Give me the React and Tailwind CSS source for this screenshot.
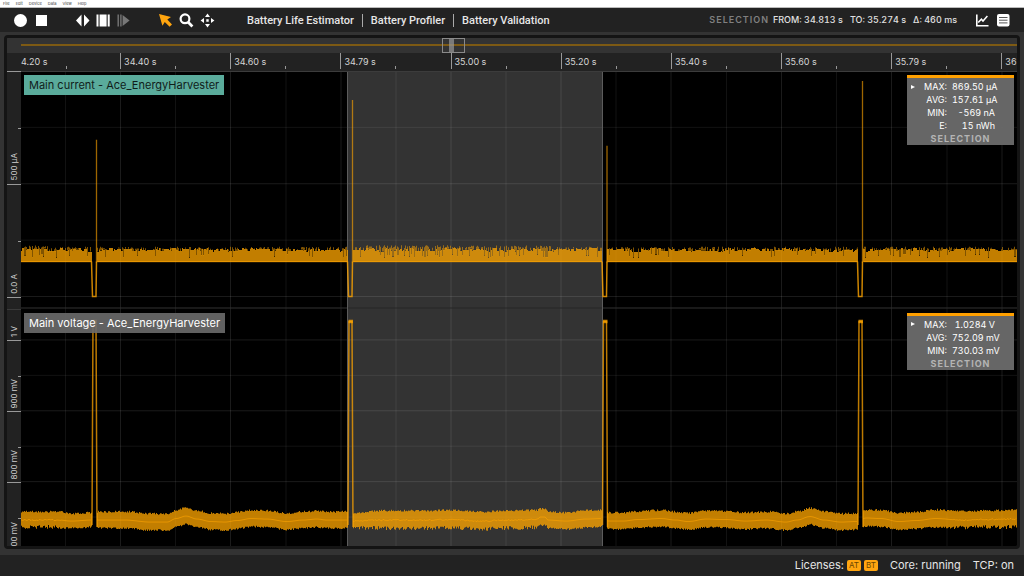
import React from "react";

const WIDTH = 996;
const HEIGHT = 476;
const LANE = 238;

const MENU = ["File", "Edit", "Device", "Data", "View", "Help"];
const PAGES = ["Battery Life Estimator", "Battery Profiler", "Battery Validation"];
const TIMES = ["34.40 s", "34.60 s", "34.79 s", "35.00 s", "35.20 s", "35.40 s", "35.60 s", "35.79 s", "36"];

const PULSES = [
  { x: 71.5, w: 4, peak: 69 },
  { x: 327.5, w: 4, peak: 29 },
  { x: 582, w: 4, peak: 75 },
  { x: 837.5, w: 4, peak: 10 },
];

// Mean voltage trace: [x, y, half height of the noise band]
const VOLTAGE_MEAN = [
  [0, 450, 8], [38, 450, 8], [50, 451, 7], [71, 450, 7], [78, 450, 8], [104, 450, 8], [129, 452, 8],
  [146, 452, 8], [155, 448.5, 8], [165, 446, 8], [176, 449, 8], [190, 451.5, 8], [204, 452, 8],
  [216, 450.5, 8], [230, 448.5, 8], [246, 449, 8], [266, 451.5, 8], [282, 450, 8], [296, 449, 8],
  [306, 450, 8], [325, 450, 8], [334, 451, 8], [360, 450, 9], [400, 450, 9], [430, 449.5, 9], [460, 451, 9],
  [485, 450, 9], [516, 449.5, 9], [519, 447, 8], [524, 447, 8], [527, 450, 8], [545, 451, 8],
  [565, 449, 8.5], [580, 448.5, 8], [588, 451, 8], [602, 451, 8], [617, 449.5, 8], [640, 448.5, 8],
  [655, 450, 8], [667, 451.5, 8], [685, 449, 8], [705, 449.5, 8], [725, 451, 8], [745, 450, 8],
  [765, 452, 8], [776, 450, 8], [789, 446.5, 8], [803, 450, 8], [820, 452, 8], [835, 451.5, 8],
  [845, 448, 8], [860, 448.5, 8], [878, 451.5, 8], [895, 450.5, 8], [915, 448.5, 8.5], [940, 450, 8.5],
  [965, 449.5, 8.5], [996, 449, 9],
];

function randomSource(seed) {
  let s = seed;
  return () => {
    s = (s * 1664525 + 1013904223) % 4294967296;
    return s / 4294967296;
  };
}

function meanAt(x) {
  let i = 0;
  while (i < VOLTAGE_MEAN.length - 2 && VOLTAGE_MEAN[i + 1][0] <= x) i++;
  const [x0, y0, h0] = VOLTAGE_MEAN[i];
  const [x1, y1, h1] = VOLTAGE_MEAN[i + 1];
  const t = (1 - Math.cos(Math.PI * ((x - x0) / (x1 - x0)))) / 2;
  return [y0 + (y1 - y0) * t, h0 + (h1 - h0) * t];
}

const inPulse = (x) => PULSES.some((p) => x >= p.x - 1 && x < p.x + p.w);
const isCalm = (x) => !(x < 40 || (x > 332 && x < 520) || x > 930);

function buildTraces() {
  const rnd = randomSource(7);
  let body = "";
  let hair = "";
  let volts = "";
  let mean = "";
  let pen = false;
  let level = 179;
  for (let x = 0; x < WIDTH; x++) {
    if (inPulse(x)) {
      pen = false;
      continue;
    }
    const busy = x < 28 || (x > 332 && x < 530);
    if (rnd() < 0.5) level = 177.5 + rnd() * 3.5;
    const notch = rnd() < (busy ? 0.24 : 0.12) ? 6 : 0;
    const bodyTop = level + notch;
    const hairTop = notch || rnd() < 0.5 ? (busy ? 174.5 : 176) + rnd() * 3 : bodyTop;
    body += `M${x} 191.5V${bodyTop.toFixed(1)}h1V191.5z`;
    if (hairTop < bodyTop) hair += `M${x} ${bodyTop.toFixed(1)}V${hairTop.toFixed(1)}h1V${bodyTop.toFixed(1)}z`;

    const [m, h] = meanAt(x);
    const rough = isCalm(x) ? 1.8 : 4;
    const top = m - h + 0.6 - rnd() * 2;
    const bottom = m + h - rnd() * rough + 1;
    volts += `M${x} ${bottom.toFixed(1)}V${top.toFixed(1)}h1V${bottom.toFixed(1)}z`;
    const jitter = isCalm(x) ? 0 : (rnd() - 0.5) * 1.4;
    mean += `${pen ? "L" : "M"}${x} ${(m + jitter).toFixed(1)}`;
    pen = true;
  }
  return { body, hair, volts, mean };
}

const TRACES = buildTraces();
const MAJOR_X = [99.5, 209.5, 320, 430, 540, 650, 760.5, 870.5, 981];
const MINOR_X = [44.5, 154.5, 265, 375, 485, 595, 705.5, 815.5, 926];
const MAJOR_Y = [113, 226, 269.5, 340.5, 411.5];
const MINOR_Y = [56.5, 169.5, 305, 376, 447];

function Chart() {
  return (
    <svg
      className="block h-full w-full"
      viewBox={`0 0 ${WIDTH} ${HEIGHT}`}
      preserveAspectRatio="none"
      role="img"
      aria-label="Main current and main voltage over time"
    >
      <rect width={WIDTH} height={HEIGHT} fill="#000" />
      <rect x="327" width="254.5" height={HEIGHT} fill="#333" />
      <g stroke="#fff" strokeOpacity="0.11">
        {MAJOR_X.map((x) => <path key={x} d={`M${x} 0V${HEIGHT}`} />)}
        {MAJOR_Y.map((y) => <path key={y} d={`M0 ${y}H${WIDTH}`} />)}
      </g>
      <g stroke="#fff" strokeOpacity="0.075">
        {MINOR_X.map((x) => <path key={x} d={`M${x} 0V${HEIGHT}`} />)}
        {MINOR_Y.map((y) => <path key={y} d={`M0 ${y}H${WIDTH}`} />)}
      </g>
      <path d={`M326.5 0V${HEIGHT}M581.5 0V${HEIGHT}`} stroke="#5c5c5c" />
      <path d={`M0 ${LANE - 0.5}H326M582 ${LANE - 0.5}H${WIDTH}`} stroke="#333" />
      <path d={`M327 ${LANE - 0.5}H581`} stroke="#272727" />
      <path d={`M0 0.5H${WIDTH}`} stroke="#3d3d3d" />
      <g fill="#ffa500">
        <path d={TRACES.body} fillOpacity="0.76" shapeRendering="crispEdges" />
        <path d={TRACES.hair} fillOpacity="0.5" />
        <path d={TRACES.volts} fillOpacity="0.76" />
      </g>
      <g fill="none" stroke="#ffa500">
        <path d={TRACES.mean} strokeOpacity="0.6" />
        {PULSES.map((p, i) => {
          const start = i === 0 ? 0 : PULSES[i - 1].x + PULSES[i - 1].w + 1;
          return <path key={p.x} d={`M${start} 191H${p.x - 1}`} strokeOpacity="0.6" strokeWidth="1.4" />;
        })}
        <path d={`M843 191H${WIDTH}`} strokeOpacity="0.6" strokeWidth="1.4" />
        {PULSES.map((p) => (
          <g key={p.x}>
            <path
              d={`M${p.x - 1} 191L${p.x} 226H${p.x + p.w - 0.5}L${p.x + p.w} 191`}
              strokeOpacity="0.8"
              strokeWidth="1.5"
            />
            <path d={`M${p.x + p.w} 192V${p.peak}`} strokeOpacity="0.62" strokeWidth="1.3" />
            <path
              d={`M${p.x - 0.5} 455L${p.x + 0.5} 251H${p.x + p.w - 0.5}L${p.x + p.w + 0.5} 457`}
              strokeOpacity="0.74"
              strokeWidth="1.5"
            />
            <path d={`M${p.x} 251H${p.x + p.w + 0.5}`} strokeWidth="3.5" strokeOpacity="0.75" />
          </g>
        ))}
      </g>
    </svg>
  );
}

function IconButton({ label, children }) {
  return (
    <button type="button" aria-label={label} className="block size-4 shrink-0">
      <svg viewBox="0 0 16 16" className="size-4">{children}</svg>
    </button>
  );
}

function Toolbar() {
  return (
    <header className="flex h-6 shrink-0 items-center bg-[#222] pr-[13px] pl-3 text-[#e6e6e6]">
      <div className="flex items-center gap-[25px]">
        <div className="flex gap-[5px]">
          <IconButton label="Record">
            <circle cx="8.5" cy="8.5" r="6.5" fill="#fff" />
          </IconButton>
          <IconButton label="Stop">
            <rect x="3" y="3" width="11" height="11" fill="#fff" />
          </IconButton>
        </div>
        <div className="flex gap-[5px]">
          <IconButton label="Fit width">
            <path d="M7.5 2.6V14.4L2 8.5zM10 2.6V14.4L15.5 8.5z" fill="#fff" />
          </IconButton>
          <IconButton label="Fit selection">
            <path d="M1.5 2.5h2v12h-2zM4.6 2.5h7v12h-7zM12.7 2.5h2v12h-2z" fill="#fff" />
          </IconButton>
          <IconButton label="Follow">
            <path d="M1.5 2.5h1.4v12H1.5zM4.2 2.5h1.4v12H4.2zM6.6 3L13.6 8.5L6.6 14z" fill="#777" />
          </IconButton>
        </div>
        <div className="flex gap-[5px]">
          <IconButton label="Select">
            <path d="M2 2L14 5L10.3 7.6L15 12.4L12.6 14.8L7.8 10L5.4 13.8z" fill="#ffa50f" />
          </IconButton>
          <IconButton label="Zoom">
            <circle cx="7" cy="6.8" r="4.4" fill="none" stroke="#fff" strokeWidth="2.2" />
            <path d="M10 10L14.4 14.4" stroke="#fff" strokeWidth="2.8" />
          </IconButton>
          <IconButton label="Pan">
            <path
              d="M8.5 1.6L11 5H6zM8.5 15.4L6 12H11zM1.6 8.5L5 6V11zM15.4 8.5L12 11V6zM7.3 7.3h2.4v2.4h-2.4z"
              fill="#fff"
            />
          </IconButton>
        </div>
      </div>
      <nav className="ml-6 flex items-center divide-x divide-[#aaa] font-['Roboto','Liberation_Sans',sans-serif] text-[11px] font-medium whitespace-nowrap">
        {PAGES.map((p) => (
          <a key={p} href="#" className="px-2 leading-[13px]">{p}</a>
        ))}
      </nav>
      <p className="ml-auto flex gap-[7px] whitespace-nowrap text-[9px] font-medium text-[#e0e0e0] tabular-nums">
        <span>
          <span className="mr-1 font-semibold tracking-[1px] text-[#808080]">SELECTION</span>
          FROM: 34.813 s
        </span>
        <span>TO: 35.274 s</span>
        <span>Δ: 460 ms</span>
      </p>
      <div className="ml-[17px] flex gap-[5px]">
        <IconButton label="Chart view">
          <path d="M2.8 2.5V13.7H14.5" fill="none" stroke="#fff" strokeWidth="1.6" />
          <path d="M4.2 10.6L7.4 7.2L9 9L13.4 4" fill="none" stroke="#fff" strokeWidth="1.5" />
        </IconButton>
        <IconButton label="List view">
          <rect x="2" y="2" width="12.5" height="12.5" rx="2" fill="#fff" />
          <path d="M4 5.5h8.5M4 8.2h8.5M4 10.9h8.5" stroke="#555" strokeWidth="1" />
        </IconButton>
      </div>
    </header>
  );
}

function Overview() {
  return (
    <div className="flex h-[15px] shrink-0 bg-[#333] pl-3.5">
      <div className="relative flex-1 pt-1.5">
        <div className="h-0.5 bg-[#7d5a14]" />
        <div className="absolute inset-y-0 left-[42.3%] flex w-[23px] justify-center border border-[#8a8a8a]">
          <div className="h-full w-[5px] bg-[#999]/70" />
          <div className="w-1" />
        </div>
      </div>
    </div>
  );
}

function Ruler() {
  return (
    <div className="flex h-[18px] shrink-0 bg-[#222] pl-3.5 text-[9px] leading-[18px] text-[#d5d5d5]">
      <div className="flex flex-1 overflow-hidden whitespace-nowrap">
        <div className="relative w-[9.95%] shrink-0">
          4.20 s
          <span className="absolute bottom-0.5 left-[45%] h-[3px] w-px bg-[#999]" />
        </div>
        {TIMES.map((t) => (
          <div key={t} className="relative w-[11.06%] shrink-0 pl-1">
            <span className="absolute top-0 bottom-0.5 left-0 w-px bg-[#999]" />
            {t}
            <span className="absolute bottom-0.5 left-1/2 h-[3px] w-px bg-[#999]" />
          </div>
        ))}
      </div>
    </div>
  );
}

function AxisLabel({ children }) {
  return (
    <span className="mr-0.5 rotate-180 self-end pt-[3px] leading-[10px] whitespace-nowrap [writing-mode:vertical-rl]">
      {children}
    </span>
  );
}

function AxisCell({ size, label, minor, last }) {
  return (
    <div className={`relative flex min-h-0 basis-0 items-end justify-end ${size} ${last ? "" : "border-b border-[#999]"}`}>
      {label && <AxisLabel>{label}</AxisLabel>}
      {minor && <span className={`absolute right-0 h-px w-[3px] bg-[#999] ${minor}`} />}
    </div>
  );
}

function Axis() {
  return (
    <div className="flex w-3.5 shrink-0 flex-col overflow-hidden border-t border-[#999] bg-[#222] text-[8px] text-[#d0d0d0]">
      <div className="flex min-h-0 flex-1 basis-0 flex-col border-b border-[#3a3a3a]">
        <AxisCell size="grow-[113]" label="500 µA" minor="top-1/2" />
        <AxisCell size="grow-[113]" label="0.0 A" minor="top-1/2" />
        <AxisCell size="grow-[11]" last />
      </div>
      <div className="flex min-h-0 flex-1 basis-0 flex-col overflow-hidden">
        <AxisCell size="grow-[31]" label="1 V" />
        <AxisCell size="grow-[71]" label="900 mV" minor="top-1/2" />
        <AxisCell size="grow-[71]" label="800 mV" minor="top-1/2" />
        <div className="relative flex min-h-0 grow-[64] basis-0 items-end justify-end">
          <span className="absolute top-[55%] right-0 h-px w-[3px] bg-[#999]" />
          <div className="-mb-2 flex">
            <AxisLabel>700 mV</AxisLabel>
          </div>
        </div>
      </div>
    </div>
  );
}

function StatBox({ rows }) {
  return (
    <div className="w-[107px] border-t-[3px] border-[#ffa000] bg-[#6b6b6b]/95 pt-[2px] text-[9px] text-white tabular-nums">
      <table className="w-full">
        <tbody>
          {rows.map(([k, v], i) => (
            <tr key={k} className="h-[13px] leading-[13px]">
              <td className="w-3 p-0 pl-[3px]">
                {i === 0 && (
                  <svg viewBox="0 0 6 6" className="size-[6px]"><path d="M1 1L5 3L1 5z" fill="#fff" /></svg>
                )}
              </td>
              <th scope="row" className="p-0 text-right font-normal">{k}:</th>
              <td className="w-[67px] p-0 pl-[5px]">
                <div className="w-[43px] text-right whitespace-nowrap">{v}</div>
              </td>
            </tr>
          ))}
        </tbody>
      </table>
      <p className="text-center leading-[13px] font-bold tracking-[1px] text-[#b4b4b4]">SELECTION</p>
    </div>
  );
}

function LaneOverlay({ title, tone, rows }) {
  return (
    <div className="flex flex-1 items-start justify-between px-[3px] pt-1">
      <h2 className={`px-[5px] text-[11px] leading-5 whitespace-nowrap ${tone}`}>{title}</h2>
      <StatBox rows={rows} />
    </div>
  );
}

export default function App() {
  return (
    <div className="flex h-screen flex-col overflow-hidden bg-[#333] font-['Inter','Liberation_Sans',sans-serif]">
      <div className="flex h-2 shrink-0 items-center gap-1.5 border-b border-[#bbb] bg-white pl-[3px] text-[4px] leading-[7px] text-[#444]">
        {MENU.map((m) => <button type="button" key={m}>{m}</button>)}
      </div>
      <Toolbar />
      <main className="flex min-h-0 flex-1 flex-col px-1 pt-[3px] pb-[6px]">
        <div className="flex min-h-0 flex-1 flex-col overflow-hidden rounded-[4px] border-[3px] border-[#141414]">
          <Overview />
          <Ruler />
          <div className="flex min-h-0 flex-1">
            <Axis />
            <div className="relative min-w-0 flex-1">
              <Chart />
              <div className="absolute inset-0 flex flex-col">
                <LaneOverlay
                  title="Main current - Ace_EnergyHarvester"
                  tone="bg-[#5aab9b] text-[#101c1a]"
                  rows={[["MAX", "869.50 µA"], ["AVG", "157.61 µA"], ["MIN", "-569 nA"], ["E", "15 nWh"]]}
                />
                <LaneOverlay
                  title="Main voltage - Ace_EnergyHarvester"
                  tone="bg-[#6b6b6b]/90 text-white"
                  rows={[["MAX", "1.0284 V"], ["AVG", "752.09 mV"], ["MIN", "730.03 mV"]]}
                />
              </div>
            </div>
          </div>
        </div>
      </main>
      <footer className="flex h-[21px] shrink-0 items-center justify-end gap-3 bg-[#222] pr-2.5 text-[11px] text-[#e6e6e6]">
        <span className="flex items-center gap-[3px]">
          Licenses:
          <span className="rounded-[2px] bg-[#ffa510] px-[2px] text-[8px] leading-[11px] text-[#6b4500]">AT</span>
          <span className="rounded-[2px] bg-[#ffa510] px-[2px] text-[8px] leading-[11px] text-[#6b4500]">BT</span>
        </span>
        <span>Core: running</span>
        <span>TCP: on</span>
      </footer>
    </div>
  );
}
